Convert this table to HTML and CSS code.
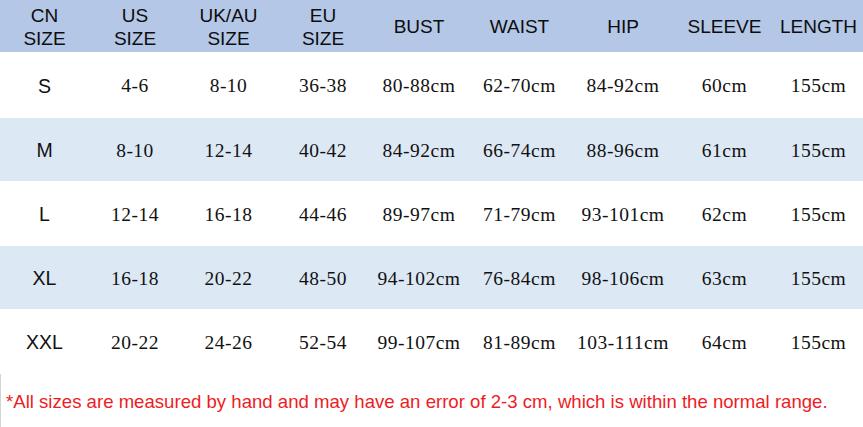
FILE: index.html
```html
<!DOCTYPE html>
<html>
<head>
<meta charset="utf-8">
<link rel="stylesheet" href="styles.css">
</head>
<body>
<div class="chart">
  <div class="row head">
    <div class="cell">CN<br>SIZE</div>
    <div class="cell">US<br>SIZE</div>
    <div class="cell">UK/AU<br>SIZE</div>
    <div class="cell">EU<br>SIZE</div>
    <div class="cell">BUST</div>
    <div class="cell">WAIST</div>
    <div class="cell">HIP</div>
    <div class="cell">SLEEVE</div>
    <div class="cell">LENGTH</div>
  </div>
  <div class="row r1">
    <div class="cell size">S</div>
    <div class="cell">4-6</div>
    <div class="cell">8-10</div>
    <div class="cell">36-38</div>
    <div class="cell">80-88cm</div>
    <div class="cell">62-70cm</div>
    <div class="cell">84-92cm</div>
    <div class="cell">60cm</div>
    <div class="cell">155cm</div>
  </div>
  <div class="row r2 alt">
    <div class="cell size">M</div>
    <div class="cell">8-10</div>
    <div class="cell">12-14</div>
    <div class="cell">40-42</div>
    <div class="cell">84-92cm</div>
    <div class="cell">66-74cm</div>
    <div class="cell">88-96cm</div>
    <div class="cell">61cm</div>
    <div class="cell">155cm</div>
  </div>
  <div class="row r3">
    <div class="cell size">L</div>
    <div class="cell">12-14</div>
    <div class="cell">16-18</div>
    <div class="cell">44-46</div>
    <div class="cell">89-97cm</div>
    <div class="cell">71-79cm</div>
    <div class="cell">93-101cm</div>
    <div class="cell">62cm</div>
    <div class="cell">155cm</div>
  </div>
  <div class="row r4 alt">
    <div class="cell size">XL</div>
    <div class="cell">16-18</div>
    <div class="cell">20-22</div>
    <div class="cell">48-50</div>
    <div class="cell">94-102cm</div>
    <div class="cell">76-84cm</div>
    <div class="cell">98-106cm</div>
    <div class="cell">63cm</div>
    <div class="cell">155cm</div>
  </div>
  <div class="row r5">
    <div class="cell size">XXL</div>
    <div class="cell">20-22</div>
    <div class="cell">24-26</div>
    <div class="cell">52-54</div>
    <div class="cell">99-107cm</div>
    <div class="cell">81-89cm</div>
    <div class="cell">103-111cm</div>
    <div class="cell">64cm</div>
    <div class="cell">155cm</div>
  </div>
  <div class="note">*All sizes are measured by hand and may have an error of 2-3 cm, which is within the normal range.</div>
</div>
</body>
</html>
```
FILE: styles.css
```css
html, body {
  margin: 0;
  padding: 0;
  background: #ffffff;
}
.chart {
  width: 863px;
  height: 427px;
  display: flex;
  flex-direction: column;
  overflow: hidden;
}
.row {
  display: grid;
  grid-template-columns: 89px 92px 95px 94px 98px 103px 104px 99px 89px;
  align-items: center;
  background: #ffffff;
}
.row .cell {
  text-align: center;
  font-family: "Liberation Serif", "Times New Roman", serif;
  font-size: 19.5px;
  color: #111;
  white-space: nowrap;
  letter-spacing: 0.5px;
  padding-top: 2px;
}
.row .cell.size {
  font-family: "Liberation Sans", Arial, sans-serif;
  font-size: 19.5px;
  letter-spacing: 0;
}
.head {
  height: 52px;
  background: #b4c7e7;
}
.head .cell {
  font-family: "Liberation Sans", Arial, sans-serif;
  font-size: 19px;
  line-height: 23px;
  letter-spacing: 0;
  color: #0d0d0d;
  padding-top: 1px;
}
.r1 { height: 66px; }
.r2 { height: 63px; }
.r3 { height: 65px; }
.r4 { height: 63px; }
.r5 { height: 65px; }
.alt { background: #dde8f5; }
.note {
  flex: 1;
  display: flex;
  align-items: center;
  padding-left: 5px;
  padding-top: 2px;
  font-family: "Liberation Sans", Arial, sans-serif;
  font-size: 18.6px;
  color: #ee1c24;
  white-space: nowrap;
  border-left: 1px solid #d4d4d4;
}
```
